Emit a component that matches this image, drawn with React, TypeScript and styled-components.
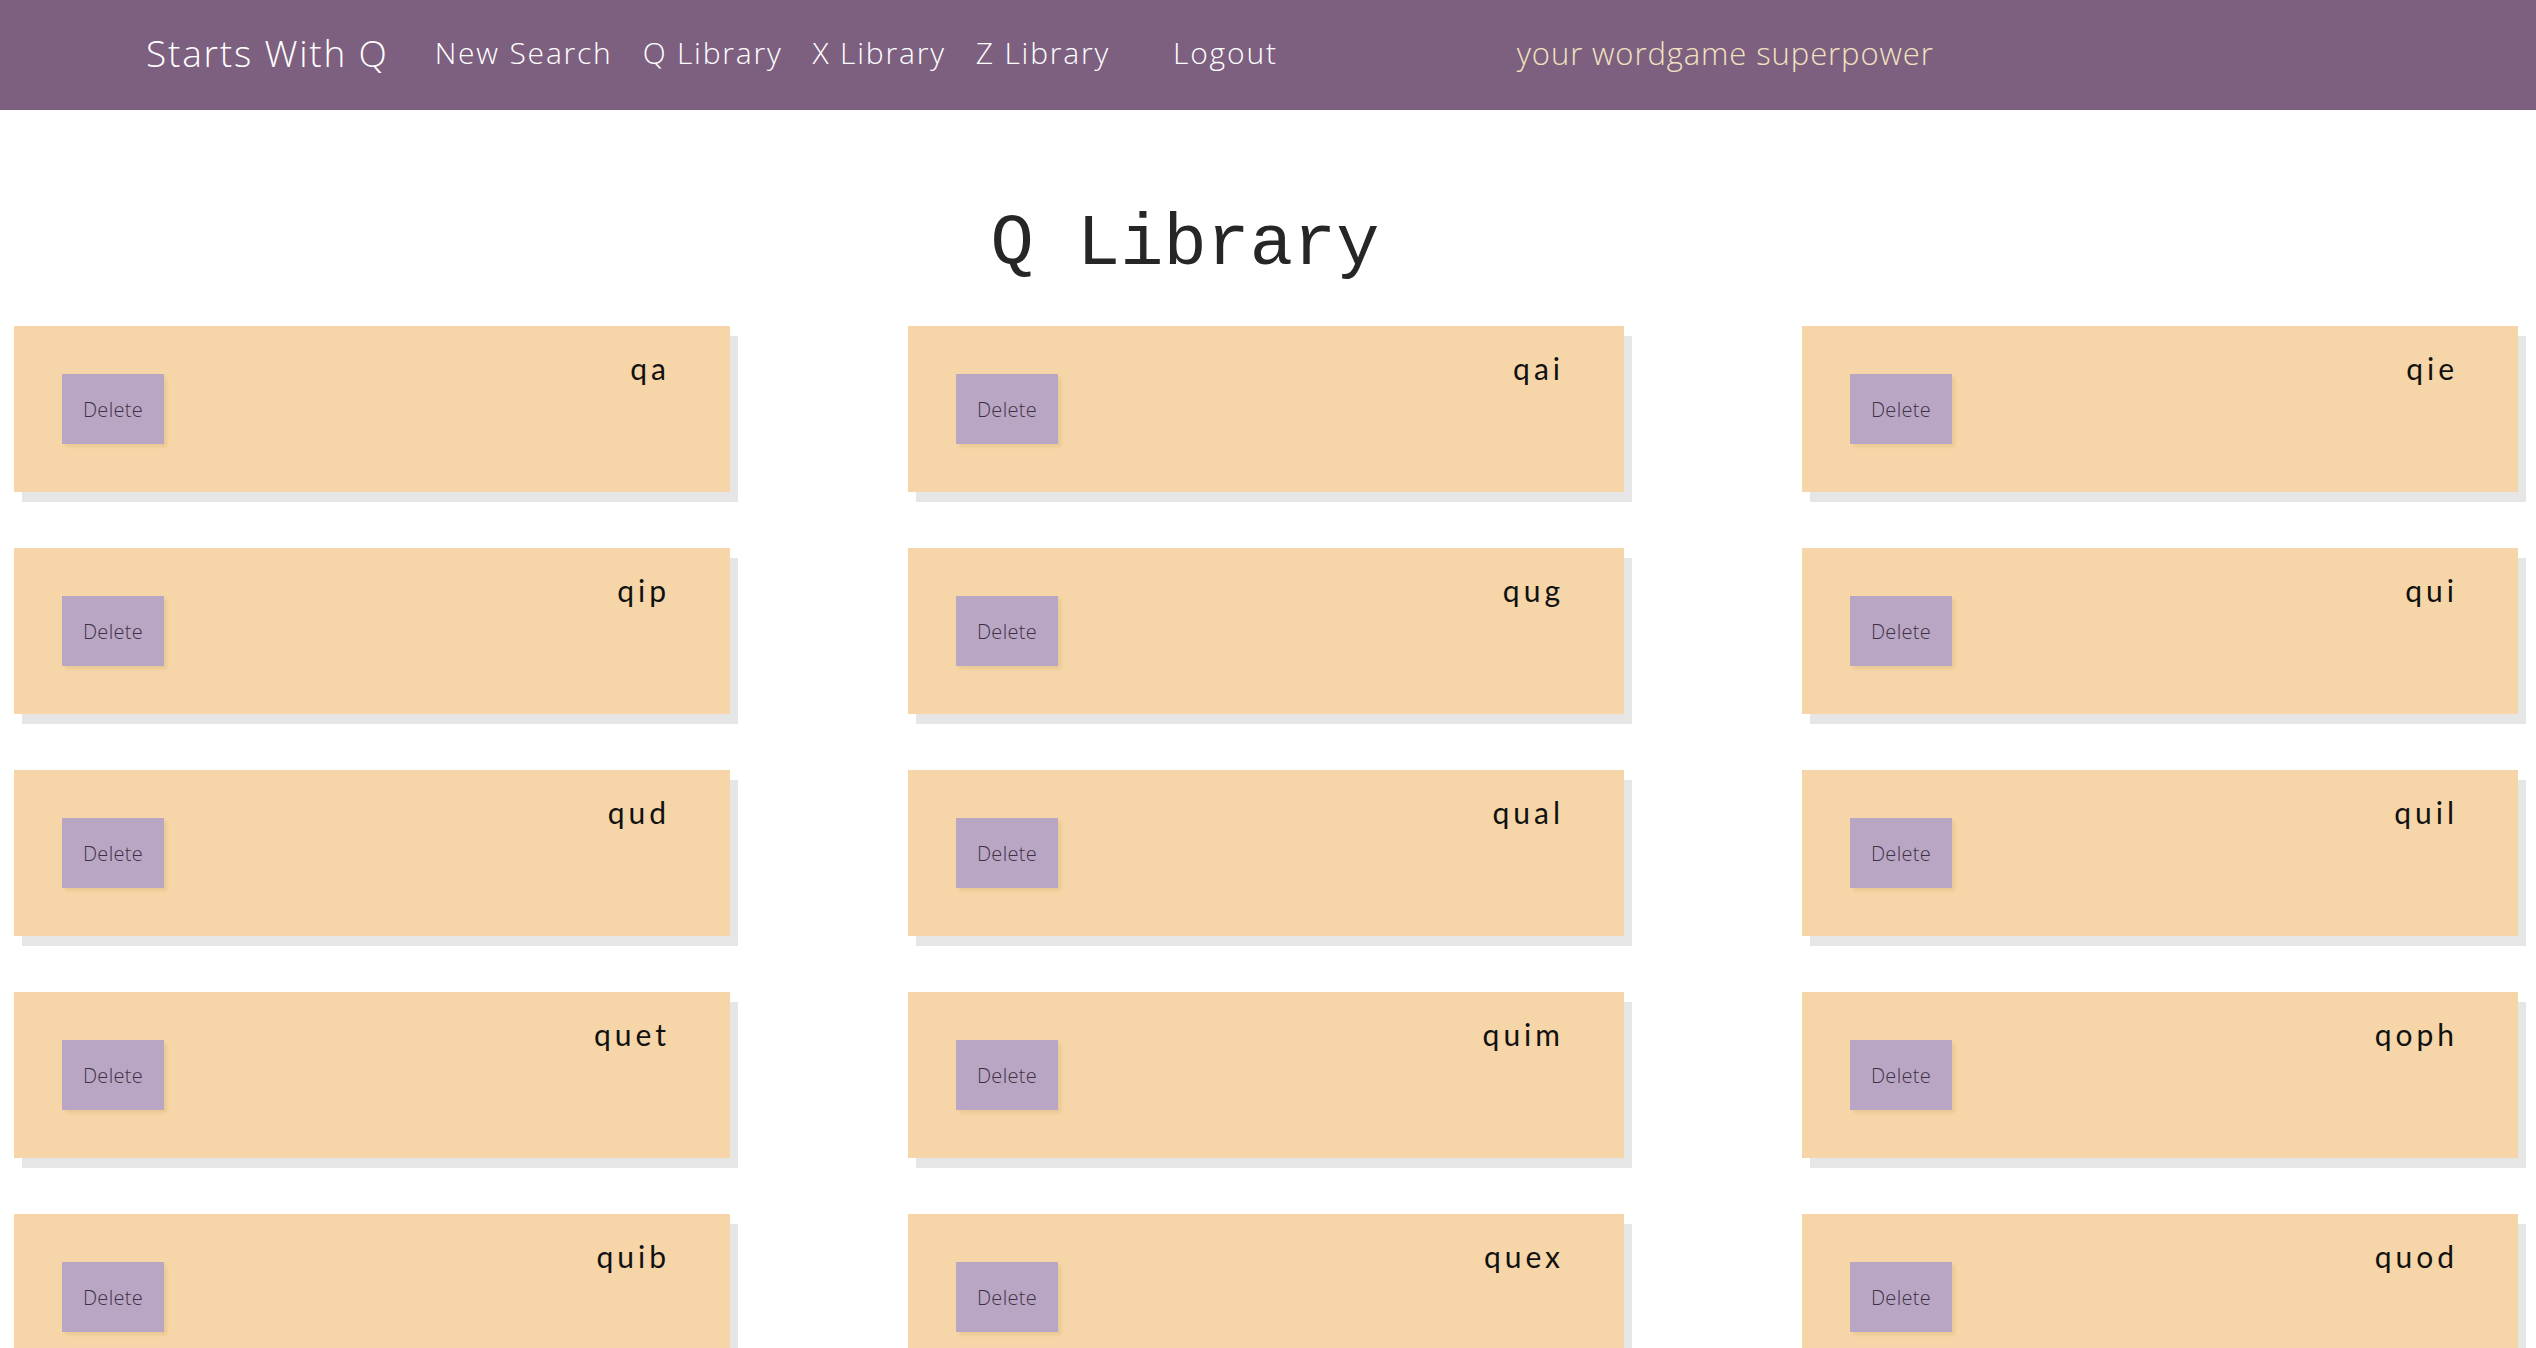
import React from "react";
import styled, { createGlobalStyle } from "styled-components";

const GlobalStyle = createGlobalStyle`
  html, body { margin: 0; padding: 0; background: #ffffff; }
  body { font-family: "Open Sans", "Lato", sans-serif; overflow: hidden; }
  * { box-sizing: border-box; }
`;

const Header = styled.header`
  height: 110px;
  background: #7d6080;
  display: flex;
  align-items: center;
  padding-left: 146px;
  padding-bottom: 5px;
`;

const Brand = styled.a`
  font-family: "Open Sans", sans-serif;
  font-weight: 300;
  font-size: 37px;
  color: #ffffff;
  text-decoration: none;
  margin-right: 46px;
  letter-spacing: 1.8px;
`;

const NavLink = styled.a<{ $gap?: number }>`
  font-family: "Open Sans", sans-serif;
  font-weight: 300;
  font-size: 30px;
  color: #ffffff;
  text-decoration: none;
  margin-right: ${(p) => p.$gap ?? 30}px;
  letter-spacing: 1.8px;
`;

const Tagline = styled.span`
  font-family: "Open Sans", sans-serif;
  font-weight: 300;
  font-size: 31px;
  color: #f1e2bf;
  letter-spacing: 0.9px;
`;

const Title = styled.h1`
  margin: 0;
  padding: 94px 166px 0 0;
  height: 216px;
  text-align: center;
  font-family: "Liberation Mono", "Courier New", monospace;
  font-weight: 400;
  font-size: 72px;
  color: #262626;
  line-height: 82px;
`;

const Grid = styled.div`
  display: grid;
  grid-template-columns: repeat(3, 716px);
  column-gap: 178px;
  row-gap: 56px;
  padding-left: 14px;
`;

const Card = styled.div`
  position: relative;
  height: 166px;
  background: #f6d6a8;
  box-shadow: 8px 10px 0 #e6e6e6;
  padding: 48px;
`;

const DeleteButton = styled.button`
  width: 102px;
  height: 70px;
  border: none;
  background: #b9a6c4;
  box-shadow: 3px 3px 3px #ebc994;
  font-family: "Open Sans", sans-serif;
  font-weight: 300;
  font-size: 20px;
  letter-spacing: 0.3px;
  color: #3f3144;
  padding: 0;
  cursor: pointer;
`;

const Word = styled.span`
  position: absolute;
  top: 24px;
  right: 60px;
  font-family: "Lato", "Open Sans", sans-serif;
  font-size: 30px;
  letter-spacing: 4px;
  color: #111111;
`;

const words = [
  "qa", "qai", "qie",
  "qip", "qug", "qui",
  "qud", "qual", "quil",
  "quet", "quim", "qoph",
  "quib", "quex", "quod",
];

export default function App() {
  return (
    <>
      <GlobalStyle />
      <Header>
        <Brand>Starts With Q</Brand>
        <NavLink>New Search</NavLink>
        <NavLink>Q Library</NavLink>
        <NavLink>X Library</NavLink>
        <NavLink $gap={63}>Z Library</NavLink>
        <NavLink $gap={239}>Logout</NavLink>
        <Tagline>your wordgame superpower</Tagline>
      </Header>
      <Title>Q Library</Title>
      <Grid>
        {words.map((w) => (
          <Card key={w}>
            <DeleteButton>Delete</DeleteButton>
            <Word>{w}</Word>
          </Card>
        ))}
      </Grid>
    </>
  );
}
